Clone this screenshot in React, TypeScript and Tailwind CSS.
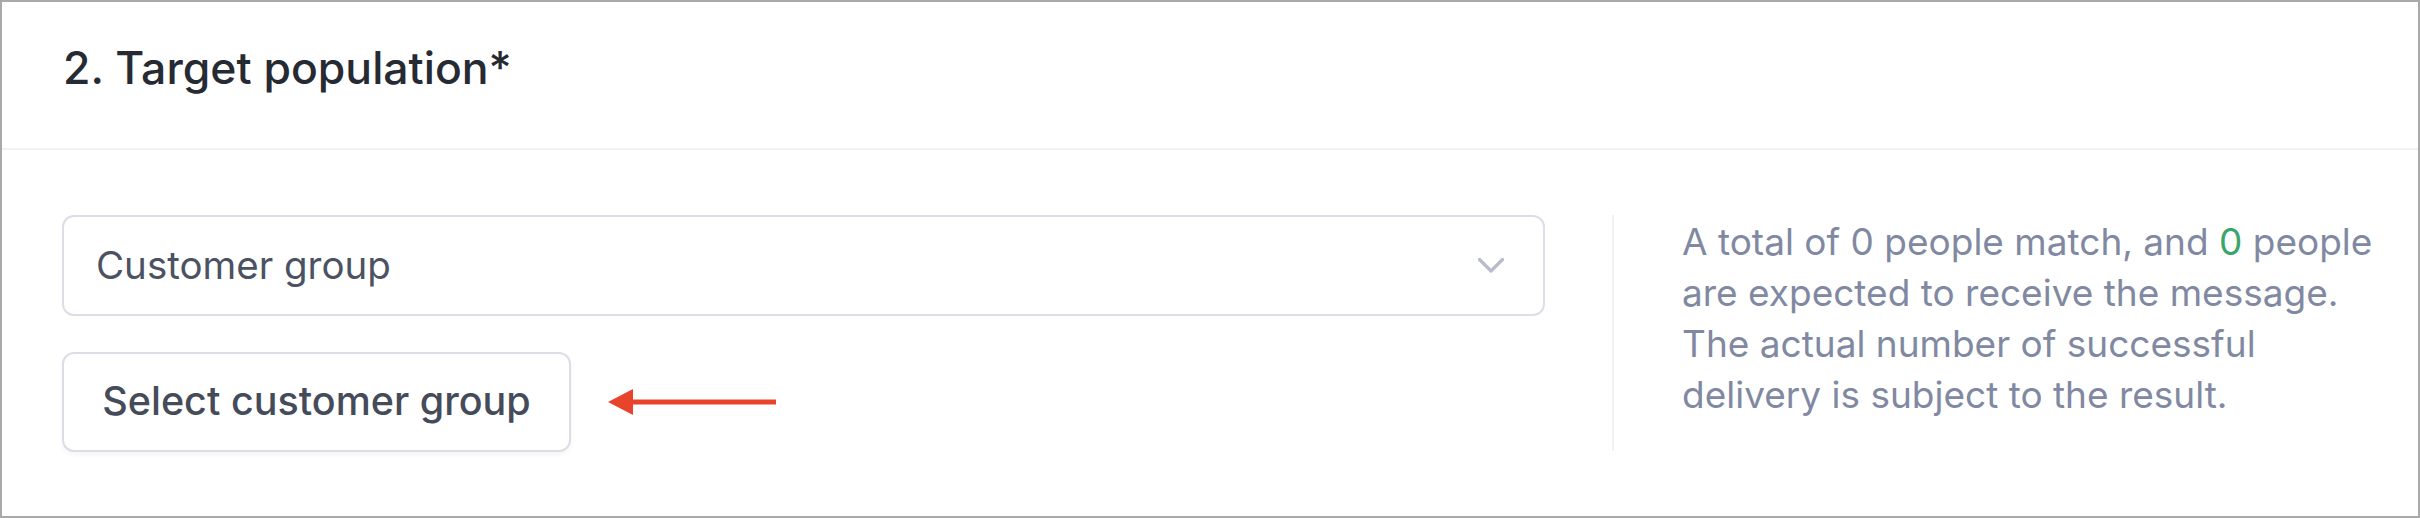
import React from "react";

export default function App() {
  return (
    <div
      className="w-[2420px] h-[518px] bg-white border-2 border-[#a9a9a9] flex flex-col"
      style={{ fontFamily: "Inter, 'Noto Sans', sans-serif" }}
    >
      <div className="h-[148px] shrink-0 flex items-center pl-[61px] pb-[14px] border-b-2 border-[#f2f2f2]">
        <h2 className="text-[44.5px] font-medium text-[#262a33] leading-none">
          2. Target population*
        </h2>
      </div>
      <div className="flex pl-[60px] pt-[65px]">
        <div className="w-[1483px] shrink-0 flex flex-col gap-[36px]">
          <div className="h-[101px] rounded-[12px] border-2 border-[#dcdee7] flex items-center justify-between pl-[32px] pr-[39px]">
            <span className="text-[38.5px] text-[#4b5262] leading-none">Customer group</span>
            <svg width="26" height="16" viewBox="0 0 26 16" fill="none">
              <polyline points="1.5,1.5 13,13 24.5,1.5" stroke="#b8bcc8" strokeWidth="3.2" strokeLinecap="round" strokeLinejoin="round" />
            </svg>
          </div>
          <div className="flex items-center">
            <button className="w-[509px] h-[100px] rounded-[12px] border-2 border-[#dcdee7] bg-white shadow-[0_3px_5px_rgba(0,0,0,0.04)] text-[39.5px] font-medium text-[#454b59] leading-none">
              Select customer group
            </button>
            <svg className="ml-[37px]" width="168" height="26" viewBox="0 0 168 26">
              <polygon points="0,13 25,0 25,26" fill="#e9432b" />
              <rect x="20" y="10.5" width="148" height="5" fill="#e9432b" />
            </svg>
          </div>
        </div>
        <div className="ml-[67px] w-[2px] h-[236px] bg-[#f1f1f3] shrink-0" />
        <div className="pl-[68px] pt-[1px] text-[37px] leading-[51px] text-[#8189a2] whitespace-nowrap">
          <div>
            A total of 0 people match, and <span className="text-[#3aa56b]">0</span> people
          </div>
          <div>are expected to receive the message.</div>
          <div>The actual number of successful</div>
          <div>delivery is subject to the result.</div>
        </div>
      </div>
    </div>
  );
}
